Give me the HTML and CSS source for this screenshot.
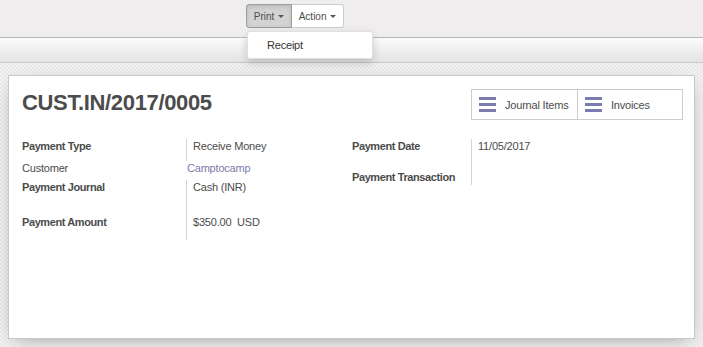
FILE: index.html
```html
<!DOCTYPE html>
<html lang="en">
<head>
  <meta charset="UTF-8">
  <title>CUST.IN/2017/0005 | Payments</title>
  <meta name="viewport" content="width=device-width, initial-scale=1.0">
  <link rel="stylesheet" href="styles.css">
</head>
<body>
  <div class="control-panel">
    <div class="btn-group">
      <button class="btn btn-print active">Print <span class="caret"></span></button>
      <button class="btn btn-action">Action <span class="caret"></span></button>
      <ul class="dropdown-menu">
        <li><a href="#">Receipt</a></li>
      </ul>
    </div>
  </div>

  <div class="statusbar"></div>

  <main class="form-view">
    <div class="sheet">
      <div class="sheet-head">
        <h1 class="title">CUST.IN/2017/0005</h1>
        <div class="button-box">
          <button class="stat-btn"><span class="list-icon"><i></i><i></i><i></i></span>Journal Items</button>
          <button class="stat-btn"><span class="list-icon"><i></i><i></i><i></i></span>Invoices</button>
        </div>
      </div>

      <div class="groups">
        <div class="group group-left">
          <div class="field h22">
            <div class="label">Payment Type</div>
            <div class="value">Receive Money</div>
          </div>
          <div class="field h19">
            <div class="label light">Customer</div>
            <div class="value plain"><a href="#">Camptocamp</a></div>
          </div>
          <div class="field h35">
            <div class="label">Payment Journal</div>
            <div class="value">Cash (INR)</div>
          </div>
          <div class="field h25">
            <div class="label">Payment Amount</div>
            <div class="value">$350.00&nbsp; USD</div>
          </div>
        </div>

        <div class="group group-right">
          <div class="field h31">
            <div class="label">Payment Date</div>
            <div class="value">11/05/2017</div>
          </div>
          <div class="field h15">
            <div class="label">Payment Transaction</div>
            <div class="value"></div>
          </div>
        </div>
      </div>
    </div>
  </main>
</body>
</html>
```

FILE: styles.css
```css
body {
  margin: 0;
  font-family: "Liberation Sans", Arial, sans-serif;
  font-size: 11px;
  color: #4c4c4c;
  background: #efeded;
}

/* Top control panel with Print / Action */
.control-panel {
  height: 37px;
  background: #efeded;
  border-bottom: 1px solid #b9b9b9;
}

.btn-group {
  position: relative;
  display: flex;
  margin-left: 246px;
  padding-top: 4px;
  width: max-content;
}

.btn {
  height: 24px;
  padding: 0;
  font-family: "Liberation Sans", Arial, sans-serif;
  font-size: 10px;
  color: #4c4c4c;
  background: #fff;
  border: 1px solid #ccc;
  border-left: none;
  border-radius: 0 3px 3px 0;
  cursor: pointer;
}

.btn-print { width: 46px; }
.btn-action { width: 52px; }

.btn.active {
  background: #d3d3d3;
  border: 1px solid #9c9c9c;
  border-radius: 3px 0 0 3px;
  box-shadow: inset 0 2px 4px rgba(0,0,0,0.12);
}

.caret {
  display: inline-block;
  width: 0;
  height: 0;
  margin-left: 1px;
  vertical-align: middle;
  border-top: 3px solid #555;
  border-left: 3px solid transparent;
  border-right: 3px solid transparent;
}

.dropdown-menu {
  position: absolute;
  top: 31px;
  left: 1px;
  width: 124px;
  margin: 0;
  padding: 0;
  list-style: none;
  background: #fff;
  border: 1px solid rgba(0,0,0,0.12);
  border-radius: 3px;
  box-shadow: 0 4px 10px rgba(0,0,0,0.18);
  z-index: 10;
}

.dropdown-menu a {
  display: block;
  padding: 6px 19px;
  line-height: 14px;
  font-size: 11px;
  color: #333;
  text-decoration: none;
  letter-spacing: -0.2px;
}

/* grey band under the control panel */
.statusbar {
  height: 24px;
  background: linear-gradient(#fbfbfb, #e4e4e4);
  border-bottom: 1px solid #c9c9c9;
}

.form-view {
  padding: 12px 8px 9px;
  background-color: #efefef;
  background-image: repeating-conic-gradient(#f2f2f2 0 25%, #e9e9e9 0 50%);
  background-size: 4px 4px;
}

.sheet {
  padding: 13px 11px 0 13px;
  box-sizing: border-box;
  height: 264px;
  background: #fff;
  border: 1px solid #c8c6d2;
  box-shadow: 0 5px 18px -8px rgba(0,0,0,0.45);
}

.sheet-head {
  display: flex;
  justify-content: space-between;
  align-items: flex-start;
}

.title {
  margin: 1px 0 0;
  font-size: 22px;
  line-height: 26px;
  font-weight: bold;
  letter-spacing: -0.35px;
  color: #4c4c4c;
}

.button-box {
  display: flex;
  border: 1px solid #ccc;
}

.stat-btn {
  display: flex;
  align-items: center;
  gap: 9px;
  width: 105px;
  height: 29px;
  padding: 0 0 0 7px;
  font-family: "Liberation Sans", Arial, sans-serif;
  font-size: 11px;
  letter-spacing: -0.2px;
  color: #4c4c4c;
  background: #fff;
  border: none;
  cursor: pointer;
}

.stat-btn + .stat-btn {
  border-left: 1px solid #ccc;
}

.list-icon {
  display: flex;
  flex-direction: column;
  gap: 3px;
  width: 17px;
}

.list-icon i {
  display: block;
  height: 3px;
  background: #7c7bad;
}

/* form groups */
.groups {
  display: flex;
  margin-top: 19px;
}

.group-left {
  width: 330px;
}

.group-right {
  flex: 1;
}

.field {
  display: flex;
  line-height: 14px;
}

.label {
  font-weight: bold;
  letter-spacing: -0.4px;
  flex: none;
}

.label.light {
  font-weight: normal;
  letter-spacing: -0.2px;
}

.group-left .label { width: 164px; }
.group-right .label { width: 119px; }

.value {
  flex: 1;
  padding-left: 6px;
  border-left: 1px solid #d4d4d4;
  letter-spacing: -0.2px;
}

.value.plain {
  border-left: none;
  padding-left: 1px;
}

.value a {
  color: #7c7bad;
  text-decoration: none;
}

.h15 { height: 15px; }
.h19 { height: 19px; }
.h22 { height: 22px; }
.h25 { height: 25px; }
.h31 { height: 31px; }
.h35 { height: 35px; }
```
